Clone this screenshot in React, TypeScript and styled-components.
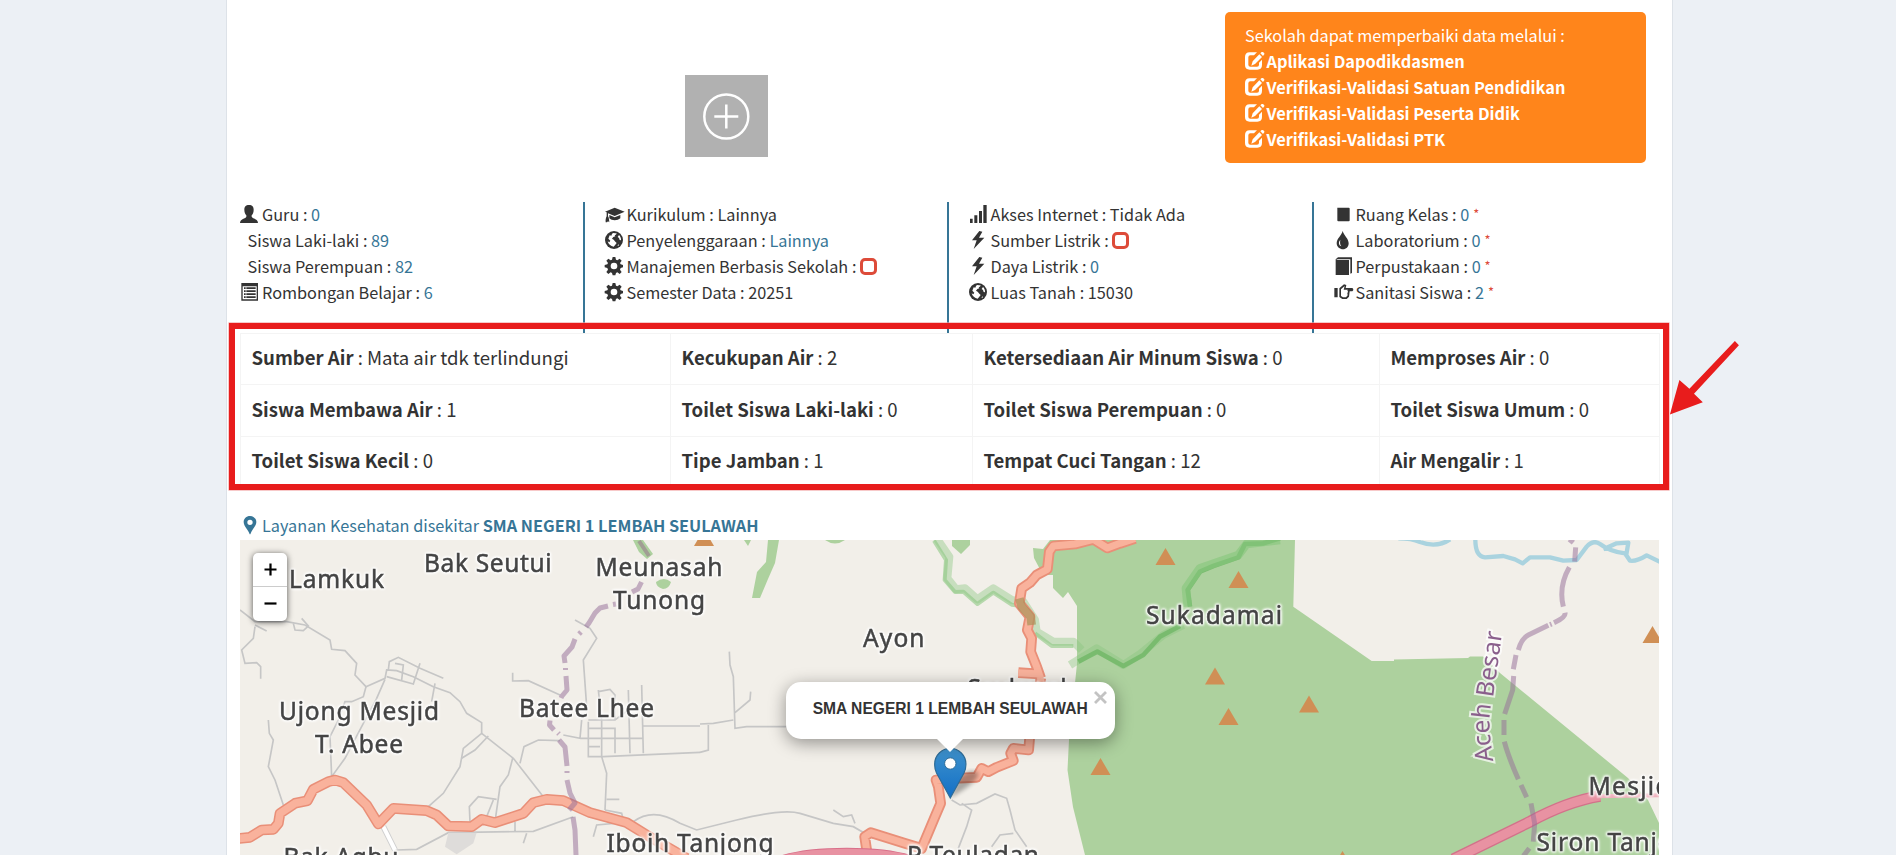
import React from "react";
import styled, { createGlobalStyle } from "styled-components";

const GlobalStyle = createGlobalStyle`
  * { box-sizing: border-box; }
  html, body { margin: 0; height: 855px; overflow: hidden; }
  body {
    background: #ecf0f5;
    color: #333;
    font-family: "Noto Sans CJK JP", "Noto Sans", sans-serif;
    font-size: 16.28px;
    line-height: 26px;
  }
`;

const Page = styled.div`
  position: relative;
  width: 1896px;
  height: 855px;
  overflow: hidden;
`;

const Wrapper = styled.main`
  display: flex;
  flex-direction: column;
  width: 1447px;
  height: 855px;
  margin-left: 226px;
  padding: 0 13px 0 13px;
  background: #fff;
  border: solid #dde2e8;
  border-width: 0 1px;
`;

const TopRow = styled.div`
  display: flex;
  height: 202px;
`;

const Photo = styled.div`
  width: 82.5px;
  height: 82.5px;
  margin: 74.7px 0 0 445px;
  background: #b1b1b1;
  svg { display: block; }
`;

const Notice = styled.div`
  width: 421px;
  height: 151px;
  margin: 12px 0 0 457.5px;
  padding: 10px 20px;
  border-radius: 5px;
  background: #ff851b;
  color: #fff;
`;

const NoticeText = styled.div`
  height: 26px;
  white-space: nowrap;
`;

const NoticeLink = styled.a`
  display: flex;
  align-items: center;
  gap: 3.4px;
  height: 26px;
  font-size: 16.38px;
  font-weight: 700;
  white-space: nowrap;
`;

const Stats = styled.div`
  display: flex;
  height: 131px;
`;

const StatColumn = styled.div<{ $w: number; $first?: boolean; $last?: boolean }>`
  width: ${(p) => p.$w}px;
  flex: none;
  padding-left: ${(p) => (p.$first ? "0" : "19.5px")};
  border-right: ${(p) => (p.$last ? "0" : "2px solid #367596")};
`;

const StatRow = styled.div<{ $indent?: boolean }>`
  display: flex;
  align-items: center;
  gap: 4px;
  height: 26px;
  padding-left: ${(p) => (p.$indent ? "7.5px" : "0")};
  white-space: pre;
  position: relative;
  top: -1.5px;
`;

const Value = styled.a`
  color: #367596;
`;

const Star = styled.sup`
  margin-left: 1px;
  color: #dd4b39;
  font-size: 13px;
  line-height: 0;
  vertical-align: 1.5px;
`;

const Glyph = styled.svg`
  display: block;
  flex: none;
  width: 18px;
  height: 18px;
  overflow: visible;
  fill: currentColor;
`;

const Unchecked = styled.span`
  display: inline-block;
  width: 17px;
  height: 17px;
  border: 3.4px solid #dd4b39;
  border-radius: 5px;
  vertical-align: -2px;
`;

const Table = styled.table`
  width: 1419px;
  border-collapse: collapse;
  table-layout: fixed;
  font-size: 18.57px;
`;

const Cell = styled.td<{ $w: number; $h: number }>`
  width: ${(p) => p.$w}px;
  height: ${(p) => p.$h}px;
  padding: 0 0 4px 10.5px;
  border: 1px solid #f4f4f4;
  white-space: pre;
`;

const MapTitle = styled.div`
  display: flex;
  align-items: center;
  flex: none;
  height: 26px;
  margin-bottom: 2px;
  padding-left: 1px;
  gap: 3px;
  color: #367596;
  white-space: pre;
`;

const Lower = styled.section`
  display: flex;
  flex-direction: column;
  height: 522px;
  flex: none;
`;

const TableArea = styled.div`
  flex: none;
  height: 179px;
`;

const MapBox = styled.div`
  position: relative;
  width: 1419px;
  height: 315px;
  flex: none;
  overflow: hidden;
  background: #f2efe9;
`;

const MapDrawing = styled.svg`
  display: block;
  width: 1419px;
  height: 315px;
  filter: blur(0.6px);
`;

const PlaceNames = styled.g`
  font-family: "Noto Sans", sans-serif;
  font-size: 24.5px;
  fill: #444;
  stroke: #444;
  stroke-width: 0.5px;
  filter: drop-shadow(0 0 1.2px #fff) drop-shadow(0 0 1px #fff) drop-shadow(0 0 1px #fff);
`;

const ZoomControl = styled.div`
  position: absolute;
  left: 13px;
  top: 13px;
  width: 34px;
  border-radius: 5px;
  background: #fff;
  box-shadow: 0 1px 6px rgba(0, 0, 0, 0.65);
`;

const ZoomButton = styled.div<{ $split?: boolean }>`
  display: flex;
  align-items: center;
  justify-content: center;
  height: 34px;
  border-bottom: ${(p) => (p.$split ? "1px solid #ccc" : "0")};
`;

const Marker = styled.svg`
  position: absolute;
  left: 694px;
  top: 207px;
  width: 60px;
  height: 54px;
`;

const Popup = styled.div`
  position: absolute;
  left: 545.7px;
  top: 141.5px;
  width: 329px;
  height: 57px;
  display: flex;
  align-items: center;
  justify-content: center;
  padding-bottom: 3px;
  border-radius: 15px;
  background: #fff;
  box-shadow: 0 4px 17px rgba(0, 0, 0, 0.4);
  font: 700 15.6px/20px "Liberation Sans", Arial, sans-serif;
  white-space: nowrap;
`;

const PopupTip = styled.div`
  position: absolute;
  left: 696px;
  top: 198px;
  border: solid transparent;
  border-width: 14px 14px 0;
  border-top-color: #fff;
`;

const Close = styled.svg`
  position: absolute;
  right: 8px;
  top: 9px;
  width: 13px;
  height: 13px;
`;

const RedFrame = styled.div`
  position: absolute;
  left: 229px;
  top: 323px;
  width: 1440px;
  height: 167px;
  border: 6px solid #e81c1c;
  box-shadow: 0 0 0 0.6px #f2a5a5;
`;

const Arrow = styled.svg`
  position: absolute;
  left: 1664px;
  top: 336px;
`;

type IconName =
  | "user" | "list" | "cap" | "globe" | "cog" | "signal" | "flash"
  | "stop" | "tint" | "book" | "hand" | "pin" | "edit";

const icons: Record<IconName, React.ReactNode> = {
  user: (
    <path d="M27 0C37 0 41 6 41 14C41 23 38 27 35 31V35C37 41 54 41 54 54H0C0 41 17 41 19 35V31C16 27 13 23 13 14C13 6 17 0 27 0Z" />
  ),
  list: (
    <path
      fillRule="evenodd"
      d="M4 0H54V53H4ZM8 10V49H50V10ZM12 13h5v5h-5ZM19 13h28v5H19ZM12 22h5v5h-5ZM19 22h28v5H19ZM12 31h5v5h-5ZM19 31h28v5H19ZM12 40h5v5h-5ZM19 40h28v5H19Z"
    />
  ),
  cap: (
    <path d="M29 8L59 20L29 33L9 25V34C12 38 12 44 13 52L9 49L6 52L2 52C1 44 3 38 5 34V22L0 20ZM13 30L29 37L46 30V40C38 48 20 48 13 40Z" />
  ),
  globe: (
    <>
      <circle cx="27" cy="27" r="27" />
      <path
        fill="#fff"
        d="M24 6L31 7L35 7L33 11L29 12L31 16L25 18L21 23L26 26L31 32L35 36L31 41L26 47C17 45 10 40 8 31L13 34L16 29L10 23L14 13L19 14L21 9ZM42 12C46 16 49 22 48 28L44 27L42 21L38 18ZM37 44L42 39L41 44Z"
      />
    </>
  ),
  cog: (
    <path
      fillRule="evenodd"
      d="M23 0h8l2 8 4 2 7-5 6 6-5 7 2 4 7 2v7l-7 2-2 5 5 7-6 6-7-5-4 2-2 7h-8l-2-7-4-2-7 5-6-6 5-7-2-5-8-2v-7l8-2 2-4-5-7 6-6 7 5 4-2ZM27 17A10 10 0 1 0 27 37A10 10 0 1 0 27 17Z"
    />
  ),
  signal: <path d="M3 41h8v13H3ZM16 31h9v23h-9ZM30 18h9v36h-9ZM43 0h10v54H43Z" />,
  flash: <path d="M31 0L9 28H23L14 54L46 20H30L40 2Z" />,
  stop: (
    <path d="M10 8H44Q47 8 47 11V46Q47 49 44 49H13Q10 49 10 46Z" />
  ),
  tint: (
    <>
      <path d="M26 0C30 14 44 23 44 37C44 48 36 55 27 55S8 48 8 37C8 23 22 14 26 0Z" />
      <path fill="#fff" d="M19 26C13 33 13 42 22 46C17 39 18 33 19 26Z" />
    </>
  ),
  book: (
    <path d="M12 1H54V48L49 50V7H11L6 9H45V54H5V7Z" />
  ),
  hand: (
    <path
      fillRule="evenodd"
      d="M1 15H11V43H1ZM16 16L30 4L37 6L35 15H55Q61 20 55 25H47L45 41L38 48H25L16 42ZM21 19V39L27 43H36L41 37L40 31L42 26L40 22L42 20H29L32 9Z"
    />
  ),
  pin: (
    <path
      fillRule="evenodd"
      d="M27 0C38 0 46 8 46 18C46 31 31 42 28 55H26C23 42 8 31 8 18C8 8 16 0 27 0ZM27 11A8 8 0 1 0 27 27A8 8 0 1 0 27 11Z"
    />
  ),
  edit: (
    <path d="M14 1H36L27 10H16Q10 10 10 16V38Q10 44 16 44H36Q42 44 42 38V32L51 23V39Q51 53 37 53H14Q0 53 0 39V15Q0 1 14 1ZM43 7L51 15L30 36L19 41L23 28ZM46 4L50 0H54L58 4V7L54 12Z" />
  ),
};

const Icon = ({ name }: { name: IconName }) => (
  <Glyph viewBox="0 0 54 54">{icons[name]}</Glyph>
);

const links = [
  "Aplikasi Dapodikdasmen",
  "Verifikasi-Validasi Satuan Pendidikan",
  "Verifikasi-Validasi Peserta Didik",
  "Verifikasi-Validasi PTK",
];

type Stat = {
  icon?: IconName;
  label: string;
  value?: string;
  plain?: string;
  box?: boolean;
  star?: boolean;
};

const columnWidths = [345, 364, 365, 345];
const stats: Stat[][] = [
  [
    { icon: "user", label: "Guru", value: "0" },
    { label: "Siswa Laki-laki", value: "89" },
    { label: "Siswa Perempuan", value: "82" },
    { icon: "list", label: "Rombongan Belajar", value: "6" },
  ],
  [
    { icon: "cap", label: "Kurikulum", plain: "Lainnya" },
    { icon: "globe", label: "Penyelenggaraan", value: "Lainnya" },
    { icon: "cog", label: "Manajemen Berbasis Sekolah", box: true },
    { icon: "cog", label: "Semester Data", plain: "20251" },
  ],
  [
    { icon: "signal", label: "Akses Internet", plain: "Tidak Ada" },
    { icon: "flash", label: "Sumber Listrik", box: true },
    { icon: "flash", label: "Daya Listrik", value: "0" },
    { icon: "globe", label: "Luas Tanah", plain: "15030" },
  ],
  [
    { icon: "stop", label: "Ruang Kelas", value: "0", star: true },
    { icon: "tint", label: "Laboratorium", value: "0", star: true },
    { icon: "book", label: "Perpustakaan", value: "0", star: true },
    { icon: "hand", label: "Sanitasi Siswa", value: "2", star: true },
  ],
];

const widths = [430, 302, 407, 280];
const heights = [51, 52, 51];
const facilities = [
  [["Sumber Air", "Mata air tdk terlindungi"], ["Kecukupan Air", "2"], ["Ketersediaan Air Minum Siswa", "0"], ["Memproses Air", "0"]],
  [["Siswa Membawa Air", "1"], ["Toilet Siswa Laki-laki", "0"], ["Toilet Siswa Perempuan", "0"], ["Toilet Siswa Umum", "0"]],
  [["Toilet Siswa Kecil", "0"], ["Tipe Jamban", "1"], ["Tempat Cuci Tangan", "12"], ["Air Mengalir", "1"]],
];

/* Place names: text, left edge, baseline, width */
const places: [string, number, number, number][] = [
  ["Lamkuk", 289, 587.5, 95],
  ["Bak Seutui", 424, 572, 127.5],
  ["Meunasah", 595.5, 575.7, 127],
  ["Tunong", 613, 609.3, 92],
  ["Ujong Mesjid", 279, 720, 160],
  ["T. Abee", 315, 753.3, 88],
  ["Batee Lhee", 519, 717.3, 135],
  ["Iboih Tanjong", 606.5, 851.7, 167],
  ["Bak Agbu", 283.5, 866, 115],
  ["Ayon", 863, 647.3, 61.5],
  ["Seulawah", 967.5, 696.5, 108],
  ["P Teuladan", 907, 864, 132],
  ["Sukadamai", 1146, 624, 136],
  ["Mesjid", 1588.5, 795, 82],
  ["Siron Tanjong", 1536.5, 851, 168],
];

const peaks = [
  [704, 546], [1165.5, 565], [1238.5, 588], [1215, 684.5], [1228.5, 725],
  [1309, 712.5], [1100.5, 775], [1342.5, 868], [1652.5, 643],
];

const westRoad =
  "M50 956L90 952L125 930L160 928L175 910L180 880L225 850L262 842L280 808L325 785L345 780L370 788L440 855L475 912L520 865L620 872L650 885L685 918L755 920L785 898L825 908L910 880L940 848L980 838L1030 842L1110 878L1220 908L1280 945L1400 1015";
const eastRoad =
  "M1425 55L1380 70L1342 84L1300 58L1245 72L1180 78L1168 95L1162 148L1130 165L1110 188L1085 205L1078 250L1110 290L1102 330L1115 355L1112 395L1130 440L1142 475M1075 458L1140 462M1142 475L1135 600L1110 640L1106 690L1060 685L1052 700L1060 722L1010 742L985 755L965 745L950 772L880 775L828 780L835 800L842 850L825 890L785 985L735 970L632 938L614 950L620 990";

const MapView = () => (
  <MapDrawing viewBox="240 540 1419 315">
    <rect x="240" y="540" width="1419" height="315" fill="#f2efe9" />
    <path
      fill="#add19e"
      d="M1033 548L1043 549L1050 540H1295L1293.300 606.700L1371.700 661L1394 661L1394 659.500L1468 658L1470 656.500L1483 656.500L1500 673L1628 778L1648 800L1659 823V855H1085L1073 807L1067.500 770L1069 740L1077 664V606L1068 592L1063 598L1053 588V575L1043 575L1034 558Z"
    />
    <g fill="#add19e">
      <path d="M768 540H779L775 563L768 579L760 598H752L757 572L766 562Z" />
      <path d="M744 540h7l-3 6ZM825 540h20q-10 7-20 0ZM952 540h18v5l-9 9-9-8Z" />
      <path d="M633 540h10l10 14-6 5-8-7ZM656 582q8-6 15 0-2 7-8 7-7-2-7-7Z" />
    </g>
    <path d="M639 541l10 15" stroke="#a19d94" strokeWidth="4" fill="none" />

    {/* minor streets */}
    <g transform="translate(220 520) scale(.33333)" fill="none" stroke="#c6c6c6" strokeWidth="5">
      <path d="M60 270L105 305L200 305L255 315L330 360L335 388L375 392L410 430L405 465L438 500L495 475L500 450L530 452L580 470L640 500L690 518L720 545L740 580L785 608L785 640L730 685L720 740L670 820L625 860" />
      <path d="M438 500L430 530L395 545L375 545L355 600L330 650L335 770L375 715L430 610L470 535L495 478M105 315L140 333M105 320L100 355L65 390L75 430L110 428L122 440V476M220 310L225 330L250 332L265 318L245 295" />
      <path d="M505 450L508 425L535 412L600 445L670 475M525 430L550 435L545 480M600 430L580 492L500 470M645 490L635 545" />
      <path d="M145 600L148 640L160 660L145 740L165 780L190 855M785 640L880 715L970 830M805 648L765 690L725 715M878 715L865 765L840 800L825 905M900 730L912 680L955 660L1020 662M750 905L748 860L775 830L830 838M800 890L820 840" />
      <path d="M530 990L590 988L685 938L940 934L1060 890M885 905V935M910 970L920 940" />
      <path d="M1065 300L1110 325L1130 355L1090 420L1100 560M878 458V483L925 482L1020 525M1085 600L1080 655L1030 645M1080 655H1270M1105 605V710H1150M1105 625H1185V700M1145 600V710L1160 760L1155 870M1225 510L1230 700M1265 495L1270 700M1105 680H1140M1135 510L1145 600M1135 515L1170 508L1185 525V600M1225 570L1185 600H1105M1270 618H1440M1150 710L1440 697M1160 838H1198M1120 950L1130 915L1240 905Q1300 860 1380 910L1430 930L1550 900Q1690 865 1740 880L1840 910L1900 920L1960 955M1155 870L1205 880L1210 900" />
      <path d="M1528 395L1530 435L1540 470L1545 625L1580 620H1700M1545 578L1590 540L1592 515M1440 612L1480 610L1540 600M1465 615V690L1440 697M1840 870L1870 890L1895 885L1905 910M2195 840L2220 855L2270 850L2325 822L2360 835L2370 870L2385 930L2420 980M2225 850L2255 870L2240 920L2215 985M2380 940L2340 945L2315 980" />
      <path d="M490 920L525 990" stroke="#d0d0d0" strokeWidth="18" />
      <path d="M490 920L525 990" stroke="#fff" strokeWidth="12" />
      <path d="M685 938L770 938L760 970L710 1003L675 980Z" fill="#dedcda" stroke="none" />
    </g>

    {/* rivers */}
    <g transform="translate(1370 520) scale(.33333)" fill="none" stroke="#aad3df" strokeWidth="13" strokeLinejoin="round">
      <path d="M85 55Q125 55 150 66Q200 85 240 58M316 55Q315 110 345 112L400 108L435 118L458 130L480 112L540 112L580 122L620 120L650 80Q670 58 690 72Q720 95 765 100L780 122Q800 125 830 106L875 128M700 88L740 70L775 68L768 110" />
    </g>

    {/* trails */}
    <g transform="translate(660 520) scale(.33333)" fill="none" strokeLinejoin="round">
      <path d="M830 55L868 110L862 175L888 208L915 205L952 238L1000 205L1055 240L1090 245L1125 300L1130 335L1180 365L1240 365L1265 390M1230 435L1310 385L1390 435L1440 402L1510 345L1570 315" stroke="#86c67c" strokeOpacity=".4" strokeWidth="24" />
      <path d="M822 62L858 120L854 180L885 216L910 215L952 252L1000 218L1055 254L1090 258M1125 340L1175 378L1240 378" stroke="#8dc884" strokeOpacity=".6" strokeWidth="12" />
      <path d="M1255 425L1312 395L1390 438L1450 405L1500 350L1560 318M1590 260L1583 210L1620 155L1660 138L1735 112L1755 72L1810 70L1860 55" stroke="#74b96a" strokeOpacity=".9" strokeWidth="14" />
      <path d="M1583 260L1578 205L1620 145L1735 105L1760 72L1860 60" stroke="#86c67c" strokeOpacity=".6" strokeWidth="26" />
    </g>

    {/* main roads */}
    <g fill="none" strokeLinejoin="round">
      <g transform="translate(220 520) scale(.33333)">
        <path d={westRoad} stroke="#e98f78" strokeWidth="32" />
        <path d={westRoad} stroke="#f9b29c" strokeWidth="23" />
      </g>
      <g transform="translate(660 520) scale(.33333)">
        <path d={eastRoad} stroke="#e98f78" strokeWidth="32" />
        <path d={eastRoad} stroke="#f9b29c" strokeWidth="21" />
        <path d="M1078 235L1085 260L1112 290L1115 315" stroke="#aa9258" strokeOpacity=".7" strokeWidth="26" />
        <path d="M370 1022Q440 1000 560 1000T750 1022" stroke="#d9708a" strokeWidth="34" />
        <path d="M370 1024Q440 1003 560 1003T750 1024" stroke="#e892a2" strokeWidth="34" />
      </g>
      <g transform="translate(1370 520) scale(.33333)">
        <path d="M250 1018L480 905Q590 845 690 828" stroke="#d2728a" strokeWidth="35" />
        <path d="M250 1018L480 905Q590 845 690 828" stroke="#e892a2" strokeWidth="27" />
        <path d="M680 829L875 826" stroke="#efb0bc" strokeWidth="12" />
      </g>
    </g>

    {/* district borders */}
    <g fill="none" stroke="#96709a" strokeOpacity=".52" strokeWidth="5" strokeLinejoin="round">
      <path d="M641.500 582L638 589L632 592M616 604l-3 0.500M608 606L600 608L595 613L589 623L586 627M581 632l-2 2M575 639L572 647L564 656L565 663M565.500 668v2M566 676L567 690L562 696L561 698M550 720.500L549.500 725L554 730M558 733l1 1M559 740L565 747L567 766M567 771v2M567 780L570 793L575 803L569 810M573 817L575 830L576 855" />
      <g transform="translate(1370 520) scale(.33333)" strokeWidth="15">
        <path d="M598 58L610 68M617 82L614 125M598 142Q565 200 580 260M585 278Q588 292 552 308M545 312l-5 2M535 316L475 345Q455 355 445 390M438 405L430 448M431 468L428 510L404 582M402 600V645M403 665Q415 710 445 778M453 795L470 832M483 850L494 910L490 965M478 985L460 1008" />
      </g>
    </g>

    {peaks.map(([x, y]) => (
      <path key={`${x}-${y}`} fill="#d08f55" d={`M${x} ${y - 17}l10 17h-20Z`} />
    ))}

    <PlaceNames>
      {places.map(([name, x, y, w]) => (
        <text key={name} x={x} y={y} textLength={w}>{name}</text>
      ))}
    </PlaceNames>
    <g fontFamily='"Noto Sans", sans-serif' fontSize="24.500">
      <path id="district" d="M1493.300 761L1490 735Q1488 712 1493 698L1504 620" fill="none" />
      <text fill="#8a5f8c" stroke="#fff" strokeOpacity=".7" strokeWidth="4" paintOrder="stroke">
        <textPath href="#district" textLength="130">Aceh Besar</textPath>
      </text>
    </g>
  </MapDrawing>
);

export default function App() {
  return (
    <Page>
      <GlobalStyle />
      <Wrapper>
        <TopRow>
          <Photo>
            <svg width="82" height="82" fill="none" stroke="#fff">
              <circle cx="41.300" cy="41.500" r="22" strokeWidth="2.500" />
              <path d="M41.300 29.500V53.500M29.300 41.500H53.300" strokeWidth="2.500" />
            </svg>
          </Photo>
          <Notice>
            <NoticeText>Sekolah dapat memperbaiki data melalui :</NoticeText>
            {links.map((l) => (
              <NoticeLink key={l}>
                <Icon name="edit" />
                <span>{l}</span>
              </NoticeLink>
            ))}
          </Notice>
        </TopRow>

        <Stats>
          {stats.map((col, i) => (
            <StatColumn key={i} $w={columnWidths[i]} $first={i === 0} $last={i === 3}>
              {col.map((s) => (
                <StatRow key={s.label} $indent={!s.icon}>
                  {s.icon && <Icon name={s.icon} />}
                  <span>
                    {s.label} : {s.plain}
                    {s.value && <Value>{s.value}</Value>}
                    {s.box && <Unchecked />}
                    {s.star && <Star> *</Star>}
                  </span>
                </StatRow>
              ))}
            </StatColumn>
          ))}
        </Stats>

        <Lower>
          <TableArea>
            <Table>
              <tbody>
                {facilities.map((row, r) => (
                  <tr key={r}>
                    {row.map(([k, v], c) => (
                      <Cell key={k} $w={widths[c]} $h={heights[r]}>
                        <b>{k}</b> : {v}
                      </Cell>
                    ))}
                  </tr>
                ))}
              </tbody>
            </Table>
          </TableArea>

          <MapTitle>
            <Icon name="pin" />
            <span>Layanan Kesehatan disekitar <b>SMA NEGERI 1 LEMBAH SEULAWAH</b></span>
          </MapTitle>

          <MapBox>
            <MapView />
            <ZoomControl>
              <ZoomButton $split>
                <svg width="13" height="13"><path d="M6.500 0.500v12M0.500 6.500h12" stroke="#000" strokeWidth="2.200" /></svg>
              </ZoomButton>
              <ZoomButton>
                <svg width="13" height="13"><path d="M0.500 5.500h12" stroke="#000" strokeWidth="2.200" /></svg>
              </ZoomButton>
            </ZoomControl>
            <Marker viewBox="0 0 60 54">
              <defs>
                <linearGradient id="pinFill" x1="0" y1="0" x2="0" y2="1">
                  <stop offset="0" stopColor="#3f92cc" />
                  <stop offset="1" stopColor="#126fc6" />
                </linearGradient>
                <filter id="soft"><feGaussianBlur stdDeviation="2.200" /></filter>
              </defs>
              <path d="M16 51L24 32Q36 20 44 26Q46 34 16 51Z" fill="#000" opacity=".3" filter="url(#soft)" />
              <path d="M16.300 51L2.500 26Q.500 22 .700 17A15.600 15.600 0 0 1 31.900 17Q32 22 30 26Z" fill="url(#pinFill)" stroke="#2e6c97" strokeWidth="1.200" />
              <circle cx="16.300" cy="16.500" r="5.700" fill="#fff" stroke="#2e6c97" strokeWidth="1" />
            </Marker>
            <Popup>
              SMA NEGERI 1 LEMBAH SEULAWAH
              <Close viewBox="0 0 13 13">
                <path d="M1 1L12 12M12 1L1 12" stroke="#c3c3c3" strokeWidth="2.800" />
              </Close>
            </Popup>
            <PopupTip />
          </MapBox>
        </Lower>
      </Wrapper>

      <RedFrame />
      <Arrow width="80" height="84" viewBox="1664 336 80 84">
        <path
          fill="#e81c1c"
          d="M1669.900 414.500L1679.400 380L1689.400 388.700L1734.900 341L1738.900 345.300L1694 393.700L1702.800 402.300Z"
        />
      </Arrow>
    </Page>
  );
}
